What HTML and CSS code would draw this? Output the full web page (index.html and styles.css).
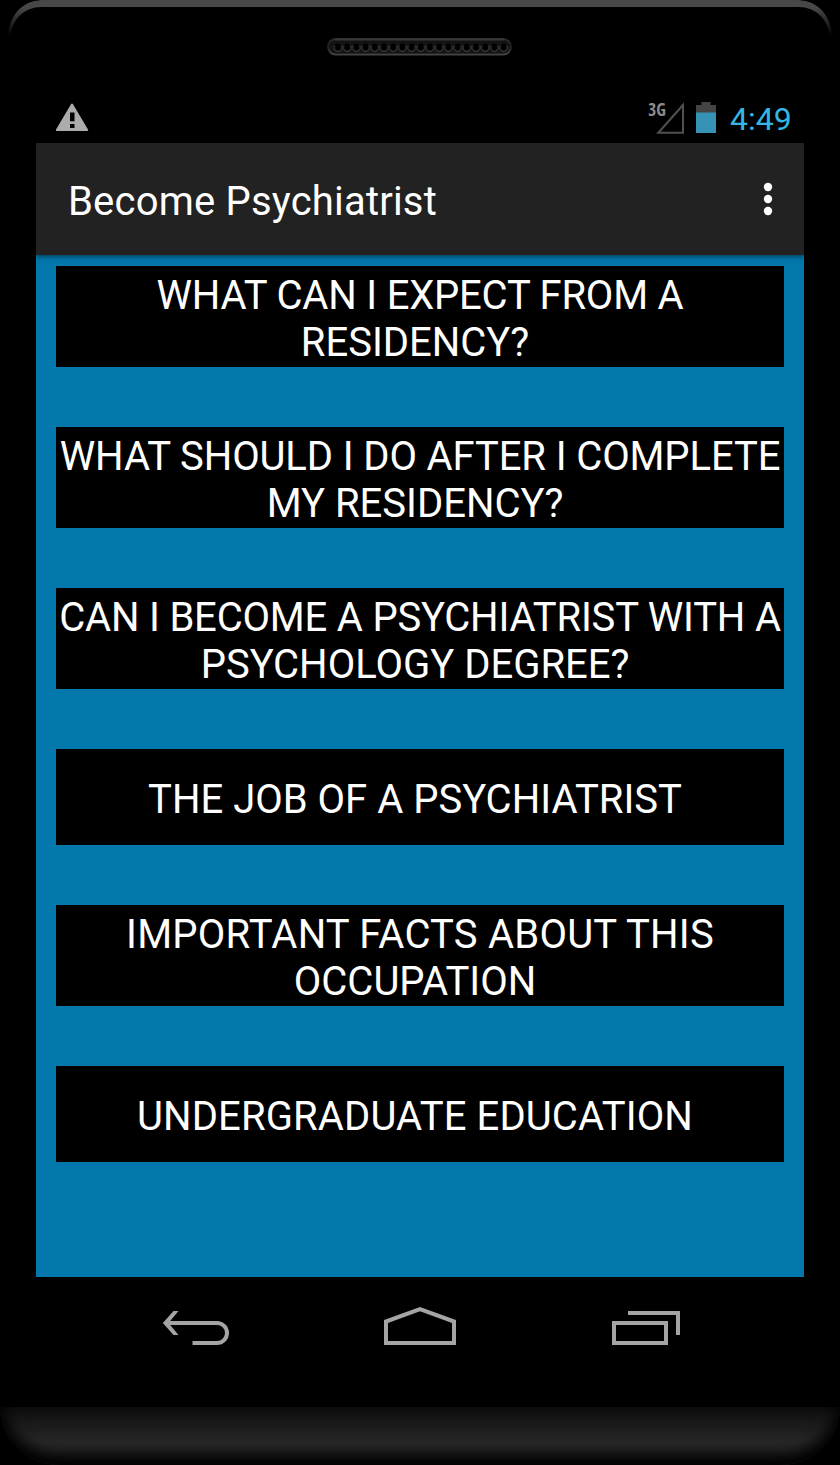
FILE: index.html
```html
<!DOCTYPE html>
<html>
	<head>
		<meta charset="utf-8">
		<title>Become Psychiatrist</title>
		<link rel="stylesheet" href="styles.css">
	</head>
	<body>
		<div class="phone">
			<div class="rim"></div>
			<svg class="speaker" width="185" height="18" viewBox="0 0 185 18">
				<defs>
					<linearGradient id="edge" x1="0" y1="0" x2="0" y2="1">
						<stop offset="0" stop-color="#2c2c2c"/>
						<stop offset="0.45" stop-color="#1c1c1c"/>
						<stop offset="1" stop-color="#424242"/>
					</linearGradient>
					<pattern id="holes" x="6.4" y="0" width="9.2" height="18" patternUnits="userSpaceOnUse">
						<circle cx="4.6" cy="9" r="3.6" fill="#000"/>
						<path d="M1.6 7.500a3.700 3.700 0 1 0 6 0" fill="none" stroke="#3c3c3c" stroke-width="1"/>
					</pattern>
				</defs>
				<rect x="1" y="1" width="183" height="15.500" rx="7.700" fill="#131313" stroke="url(#edge)" stroke-width="2"/>
				<path d="M8 1.500h169" stroke="#393939" stroke-width="2"/>
				<rect x="6.400" width="174.800" height="18" fill="url(#holes)"/>
			</svg>
			<div class="screen">
				<div class="status">
					<svg class="warning" width="33" height="30" viewBox="0 0 33 30">
						<path d="M15 1.200q1-1.600 2 0L32 26.500q.6 1.500-.8 1.500H.8Q-.6 28 0 26.500z" fill="#acacac"/>
						<path d="M14 9.500h4.500v8.700H14zM14 21h4.500v4H14z" fill="#000"/>
					</svg>
					<span class="net">3G</span>
					<svg class="signal" width="29" height="32" viewBox="0 0 29 32">
						<path d="M27 3v27.800H2.300z" fill="none" stroke="#505050" stroke-width="2"/>
					</svg>
					<svg class="battery" width="20" height="31" viewBox="0 0 20 31">
						<path d="M0 3h5.500V0h9v3H20v8H0z" fill="#444"/>
						<path d="M0 10.500h20V31H0z" fill="#3793b5"/>
					</svg>
					<span class="clock">4:49</span>
				</div>
				<div class="bar">
					<h1>Become Psychiatrist</h1>
					<svg width="10" height="34" viewBox="0 0 10 34" fill="#fff">
						<circle cx="5" cy="5" r="4.200"/>
						<circle cx="5" cy="17" r="4.200"/>
						<circle cx="5" cy="29" r="4.200"/>
					</svg>
				</div>
				<ul class="list">
					<li><span class="tight">WHAT CAN I EXPECT FROM A</span><br>RESIDENCY?&nbsp;</li>
					<li><span class="snug">WHAT SHOULD I DO AFTER I COMPLETE</span><br>MY RESIDENCY?&nbsp;</li>
					<li><span class="tight">CAN I BECOME A PSYCHIATRIST WITH A</span><br>PSYCHOLOGY DEGREE?&nbsp;</li>
					<li class="single">THE JOB OF A PSYCHIATRIST&nbsp;</li>
					<li><span class="wide">IMPORTANT FACTS ABOUT THIS</span><br>OCCUPATION&nbsp;</li>
					<li class="single"><span class="loose">UNDERGRADUATE EDUCATION&nbsp;</span></li>
				</ul>
			</div>
			<div class="nav">
				<svg width="68" height="40" viewBox="0 0 68 40" fill="none" stroke="#a4a4a4" stroke-width="4">
					<path d="M5 17H55a10 10 0 0 1 0 20H30.500"/>
					<path d="M.8 17L11.500 5H16.500L6.500 17L16.500 29H11.500z" fill="#a4a4a4" stroke="none"/>
				</svg>
				<svg class="home" width="72" height="40" viewBox="0 0 72 40" fill="none" stroke="#a4a4a4" stroke-width="4">
					<path d="M2 37V15.500L36 3.200L70 15.500V37z"/>
				</svg>
				<svg width="68" height="40" viewBox="0 0 68 40" fill="none" stroke="#a4a4a4" stroke-width="4">
					<path d="M2 17H54V37H2z"/>
					<path d="M16 7H66V29"/>
				</svg>
			</div>
			<div class="chin"></div>
		</div>
	</body>
</html>
```

FILE: styles.css
```css
body {
	margin: 0;
	background: #000;
	font-family: Roboto, sans-serif;
}
svg {
	display: block;
}
.phone {
	width: 840px;
	height: 1465px;
	overflow: hidden;
	background: #000;
}
.rim {
	box-sizing: border-box;
	height: 38px;
	margin: 0 8px;
	border: solid #484848;
	border-width: 7px 3px 0;
	border-radius: 33px 33px 0 0 / 36px 36px 0 0;
	-webkit-mask-image: linear-gradient(#000 8px, transparent 36px);
	mask-image: linear-gradient(#000 8px, transparent 36px);
}
.speaker {
	margin: 0 0 39px 327px;
}
.screen {
	width: 768px;
	margin: 0 auto;
}
.status {
	display: flex;
	align-items: flex-start;
	height: 48px;
}
.warning {
	margin: 8px auto 0 20px;
}
.net {
	margin: 5px -10px 0 0;
	font: bold 17px/20px "Open Sans", sans-serif;
	font-stretch: condensed;
	color: #8c8c8c;
}
.signal {
	margin-top: 7px;
}
.battery {
	margin: 7px 14px 0 11px;
}
.clock {
	width: 74px;
	margin-top: 5px;
	font-size: 32px;
	line-height: 38px;
	color: #33b5e5;
}
.bar {
	box-sizing: border-box;
	display: flex;
	justify-content: space-between;
	position: relative;
	height: 112px;
	padding: 34px 31px 0 32px;
	background: #222;
	box-shadow: 0 1px 5px rgba(0,0,0,.6);
	clip-path: inset(0 0 -8px 0);
}
.bar h1 {
	margin: 1px 0 0;
	font-size: 40px;
	line-height: 47px;
	font-weight: normal;
	letter-spacing: .2px;
	color: #fff;
}
.bar svg {
	margin-top: 5px;
}
.list {
	box-sizing: border-box;
	display: flex;
	flex-direction: column;
	gap: 60px;
	height: 1022px;
	margin: 0;
	padding: 11px 20px 0;
	list-style: none;
	background: #0277ac;
}
.list li {
	box-sizing: border-box;
	height: 101px;
	padding-top: 6px;
	background: #000;
	color: #fff;
	font-size: 40px;
	line-height: 47px;
	text-align: center;
	white-space: nowrap;
}
.list .single {
	height: 96px;
	padding-top: 27px;
}
.tight {
	letter-spacing: -.2px;
}
.snug {
	letter-spacing: -.12px;
}
.loose {
	letter-spacing: .12px;
}
.wide {
	letter-spacing: .22px;
}
.nav {
	box-sizing: border-box;
	display: flex;
	justify-content: space-between;
	height: 130px;
	padding: 29px 160px 0 162px;
}
.home {
	margin-left: -2px;
}
.chin {
	height: 58px;
	border-radius: 0 0 60px 60px / 0 0 58px 58px;
	background: linear-gradient(#0d0d0d, #272727 60%, #272727);
	box-shadow: inset 0 -9px 14px 2px #000;
}
```
